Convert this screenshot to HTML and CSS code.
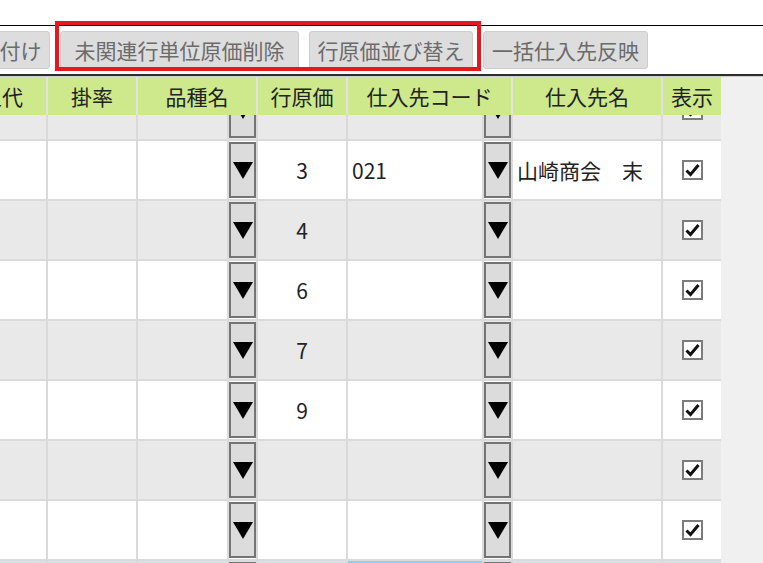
FILE: index.html
```html
<!DOCTYPE html>
<html lang="ja">
<head>
<meta charset="utf-8">
<title>行原価</title>
<link rel="stylesheet" href="styles.css">
</head>
<body>
<div class="screen">
  <div class="toolbar">
    <button class="btn btn-link">紐付け</button>
    <button class="btn btn-delete">未関連行単位原価削除</button>
    <button class="btn btn-sort">行原価並び替え</button>
    <button class="btn btn-apply">一括仕入先反映</button>
  </div>
  <div class="callout"></div>
  <div class="grid-area">
    <div class="row head">
      <div class="cell">上代</div>
      <div class="cell">掛率</div>
      <div class="cell span2">品種名</div>
      <div class="cell">行原価</div>
      <div class="cell span2">仕入先コード</div>
      <div class="cell">仕入先名</div>
      <div class="cell">表示</div>
    </div>
    <div class="body-view">
      <div class="rows">
        <div class="row alt">
          <div class="cell"></div><div class="cell"></div><div class="cell"></div>
          <div class="cell drop"><span class="dd"><i class="tri"></i></span></div>
          <div class="cell num"></div><div class="cell txt"></div>
          <div class="cell drop"><span class="dd"><i class="tri"></i></span></div>
          <div class="cell txt"></div>
          <div class="cell check"><span class="cb"><svg viewBox="0 0 17 16" width="17" height="16"><path d="M2.5 8.5 L6.5 12.5 L14.5 3" fill="none" stroke="#111" stroke-width="3"/></svg></span></div>
        </div>
        <div class="row">
          <div class="cell"></div><div class="cell"></div><div class="cell"></div>
          <div class="cell drop"><span class="dd"><i class="tri"></i></span></div>
          <div class="cell num">3</div><div class="cell txt">021</div>
          <div class="cell drop"><span class="dd"><i class="tri"></i></span></div>
          <div class="cell txt">山崎商会　末</div>
          <div class="cell check"><span class="cb"><svg viewBox="0 0 17 16" width="17" height="16"><path d="M2.5 8.5 L6.5 12.5 L14.5 3" fill="none" stroke="#111" stroke-width="3"/></svg></span></div>
        </div>
        <div class="row alt">
          <div class="cell"></div><div class="cell"></div><div class="cell"></div>
          <div class="cell drop"><span class="dd"><i class="tri"></i></span></div>
          <div class="cell num">4</div><div class="cell txt"></div>
          <div class="cell drop"><span class="dd"><i class="tri"></i></span></div>
          <div class="cell txt"></div>
          <div class="cell check"><span class="cb"><svg viewBox="0 0 17 16" width="17" height="16"><path d="M2.5 8.5 L6.5 12.5 L14.5 3" fill="none" stroke="#111" stroke-width="3"/></svg></span></div>
        </div>
        <div class="row">
          <div class="cell"></div><div class="cell"></div><div class="cell"></div>
          <div class="cell drop"><span class="dd"><i class="tri"></i></span></div>
          <div class="cell num">6</div><div class="cell txt"></div>
          <div class="cell drop"><span class="dd"><i class="tri"></i></span></div>
          <div class="cell txt"></div>
          <div class="cell check"><span class="cb"><svg viewBox="0 0 17 16" width="17" height="16"><path d="M2.5 8.5 L6.5 12.5 L14.5 3" fill="none" stroke="#111" stroke-width="3"/></svg></span></div>
        </div>
        <div class="row alt">
          <div class="cell"></div><div class="cell"></div><div class="cell"></div>
          <div class="cell drop"><span class="dd"><i class="tri"></i></span></div>
          <div class="cell num">7</div><div class="cell txt"></div>
          <div class="cell drop"><span class="dd"><i class="tri"></i></span></div>
          <div class="cell txt"></div>
          <div class="cell check"><span class="cb"><svg viewBox="0 0 17 16" width="17" height="16"><path d="M2.5 8.5 L6.5 12.5 L14.5 3" fill="none" stroke="#111" stroke-width="3"/></svg></span></div>
        </div>
        <div class="row">
          <div class="cell"></div><div class="cell"></div><div class="cell"></div>
          <div class="cell drop"><span class="dd"><i class="tri"></i></span></div>
          <div class="cell num">9</div><div class="cell txt"></div>
          <div class="cell drop"><span class="dd"><i class="tri"></i></span></div>
          <div class="cell txt"></div>
          <div class="cell check"><span class="cb"><svg viewBox="0 0 17 16" width="17" height="16"><path d="M2.5 8.5 L6.5 12.5 L14.5 3" fill="none" stroke="#111" stroke-width="3"/></svg></span></div>
        </div>
        <div class="row alt">
          <div class="cell"></div><div class="cell"></div><div class="cell"></div>
          <div class="cell drop"><span class="dd"><i class="tri"></i></span></div>
          <div class="cell num"></div><div class="cell txt"></div>
          <div class="cell drop"><span class="dd"><i class="tri"></i></span></div>
          <div class="cell txt"></div>
          <div class="cell check"><span class="cb"><svg viewBox="0 0 17 16" width="17" height="16"><path d="M2.5 8.5 L6.5 12.5 L14.5 3" fill="none" stroke="#111" stroke-width="3"/></svg></span></div>
        </div>
        <div class="row">
          <div class="cell"></div><div class="cell"></div><div class="cell"></div>
          <div class="cell drop"><span class="dd"><i class="tri"></i></span></div>
          <div class="cell num"></div><div class="cell txt"></div>
          <div class="cell drop"><span class="dd"><i class="tri"></i></span></div>
          <div class="cell txt"></div>
          <div class="cell check"><span class="cb"><svg viewBox="0 0 17 16" width="17" height="16"><path d="M2.5 8.5 L6.5 12.5 L14.5 3" fill="none" stroke="#111" stroke-width="3"/></svg></span></div>
        </div>
        <div class="row selected">
          <div class="cell"></div><div class="cell"></div><div class="cell"></div>
          <div class="cell drop"><span class="dd"><i class="tri"></i></span></div>
          <div class="cell num"></div><div class="cell txt focus"></div>
          <div class="cell drop"><span class="dd"><i class="tri"></i></span></div>
          <div class="cell txt"></div>
          <div class="cell check"></div>
        </div>
      </div>
    </div>
  </div>
</div>
</body>
</html>
```

FILE: styles.css
```css
html, body {
  margin: 0;
  padding: 0;
  overflow: hidden;
  background: #fff;
}

body {
  font-family: "Noto Sans CJK JP", "Noto Sans", sans-serif;
  font-size: 21px;
  color: #222;
}

.screen {
  position: relative;
  width: 763px;
  height: 563px;
  padding-top: 25px;
  box-sizing: border-box;
  display: flex;
  flex-direction: column;
  overflow: hidden;
}

/* toolbar */
.toolbar {
  display: flex;
  gap: 10px;
  padding: 5px 0;
  border-top: 1px solid #000;
  border-bottom: 2px solid #2d2d2d;
  background: #fff;
}

.btn {
  height: 38px;
  padding: 0;
  margin: 0;
  font-family: inherit;
  font-size: 21px;
  line-height: 36px;
  color: #6b6b6b;
  background: #dddddd;
  border: 1px solid #cdcdcd;
  border-radius: 3px;
  text-align: center;
  white-space: nowrap;
  flex: none;
}

.btn-link { width: 80px; margin-left: -30px; }
.btn-delete { width: 239px; }
.btn-sort { width: 164px; }
.btn-apply { width: 165px; }

/* red highlight frame overlaying the toolbar */
.callout {
  position: absolute;
  left: 55px;
  top: 21px;
  width: 426px;
  height: 50px;
  box-sizing: border-box;
  border: 4px solid #e8161f;
  z-index: 2;
}

/* grid */
.grid-area {
  flex: 1;
  display: flex;
  flex-direction: column;
  background: #f0f0f0;
  border-top: 1px solid #cfcfcf;
  min-height: 0;
}

.row {
  display: grid;
  grid-template-columns: 88px 88px 89px 27px 88px 134px 27px 148px 58px;
  column-gap: 2px;
  width: 763px;
  margin-left: -42px;
  background: #dadada;
  flex: none;
}

.head {
  height: 38px;
  background: #e2e2e2;
}

.head .cell {
  background: #cde98c;
  display: flex;
  align-items: center;
  justify-content: center;
  white-space: nowrap;
  color: #222;
}

.span2 { grid-column: span 2; }

.body-view {
  flex: 1;
  overflow: hidden;
  min-height: 0;
}

.rows {
  display: flex;
  flex-direction: column;
  row-gap: 2px;
  margin-top: -34px;
  width: 763px;
  margin-left: -42px;
  background: #dadada;
}

.rows .row {
  margin-left: 0;
  height: 58px;
}

.cell {
  background: #fff;
  min-width: 0;
  overflow: hidden;
}

.alt .cell { background: #e9e9e9; }
.selected .cell { background: #d5e0e7; }

.num {
  display: flex;
  align-items: center;
  justify-content: center;
}

.txt {
  display: flex;
  align-items: center;
  padding-left: 4px;
  white-space: nowrap;
}

.focus {
  box-shadow: inset 0 2px 0 #8fd0e4;
}

.drop {
  display: flex;
  align-items: center;
}

.dd {
  width: 27px;
  height: 56px;
  box-sizing: border-box;
  border: 2px solid #747474;
  background: #dcdcdc;
  display: flex;
  align-items: center;
  justify-content: center;
}

.tri {
  display: block;
  width: 0;
  height: 0;
  border-left: 10px solid transparent;
  border-right: 10px solid transparent;
  border-top: 17px solid #000;
}

.check {
  display: flex;
  align-items: center;
  justify-content: center;
}

.cb {
  width: 21px;
  height: 20px;
  box-sizing: border-box;
  border: 2px solid #7c7c7c;
  background: #fff;
  display: flex;
  align-items: center;
  justify-content: center;
}

.cb svg { display: block; }
```
